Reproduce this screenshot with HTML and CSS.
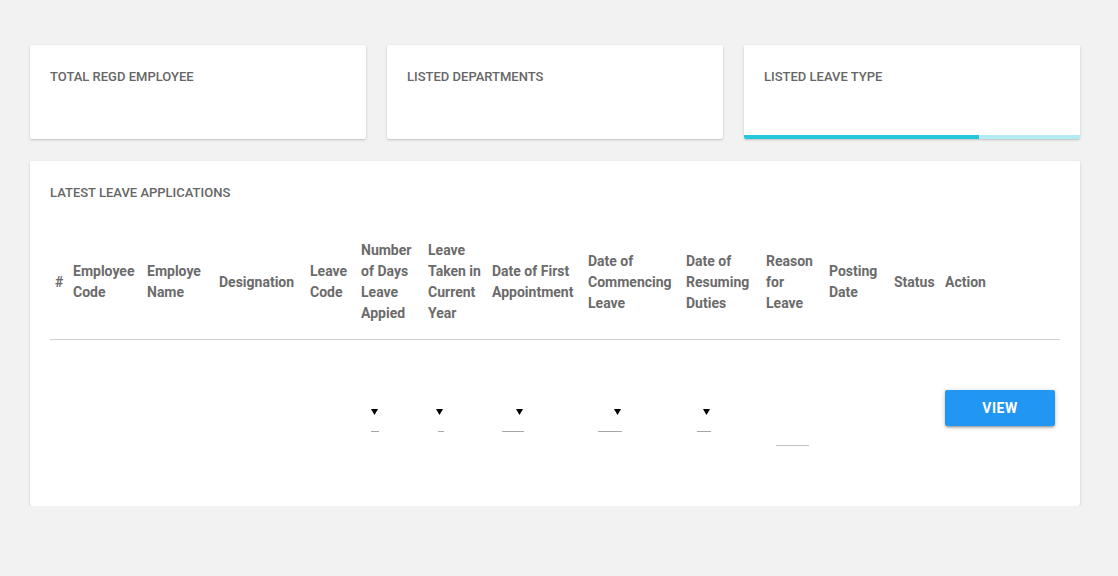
FILE: index.html
```html
<!DOCTYPE html>
<html>
<head>
<meta charset="utf-8">
<link rel="stylesheet" href="styles.css">
</head>
<body>
<div class="page">
  <div class="stats">
    <div class="card stat"><div class="card-title">Total Regd Employee</div></div>
    <div class="card stat"><div class="card-title">Listed Departments</div></div>
    <div class="card stat">
      <div class="card-title">Listed Leave Type</div>
      <div class="progress"><div class="progress-fill"></div></div>
    </div>
  </div>
  <div class="card main">
    <div class="card-title">Latest Leave Applications</div>
    <table class="apps">
      <colgroup>
        <col class="c1"><col class="c2"><col class="c3"><col class="c4"><col class="c5"><col class="c6"><col class="c7">
        <col class="c8"><col class="c9"><col class="c10"><col class="c11"><col class="c12"><col class="c13"><col class="c14">
      </colgroup>
      <thead>
        <tr>
          <th>#</th>
          <th>Employee Code</th>
          <th>Employe Name</th>
          <th>Designation</th>
          <th>Leave Code</th>
          <th>Number of Days Leave Appied</th>
          <th>Leave Taken in Current Year</th>
          <th>Date of First Appointment</th>
          <th>Date of Commencing Leave</th>
          <th>Date of Resuming Duties</th>
          <th>Reason for Leave</th>
          <th>Posting Date</th>
          <th class="nowrap">Status</th>
          <th class="nowrap">Action</th>
        </tr>
      </thead>
      <tbody>
        <tr>
          <td></td>
          <td></td>
          <td></td>
          <td></td>
          <td></td>
          <td><span class="select w8"><svg class="caret" viewBox="0 0 7 6"><polygon points="0,0 7,0 3.5,6"/></svg></span></td>
          <td><span class="select w6"><svg class="caret" viewBox="0 0 7 6"><polygon points="0,0 7,0 3.5,6"/></svg></span></td>
          <td><span class="select w22"><svg class="caret" viewBox="0 0 7 6"><polygon points="0,0 7,0 3.5,6"/></svg></span></td>
          <td><span class="select w24"><svg class="caret" viewBox="0 0 7 6"><polygon points="0,0 7,0 3.5,6"/></svg></span></td>
          <td><span class="select w14 ml11"><svg class="caret" viewBox="0 0 7 6"><polygon points="0,0 7,0 3.5,6"/></svg></span></td>
          <td><span class="textline"></span></td>
          <td></td>
          <td></td>
          <td><button class="btn">View</button></td>
        </tr>
      </tbody>
    </table>
  </div>
</div>
</body>
</html>
```
FILE: styles.css
```css
html, body {
  margin: 0;
  padding: 0;
  background: #f2f2f2;
  font-family: Roboto, "Liberation Sans", Arial, sans-serif;
}
.page {
  padding: 45px 38px 0 30px;
  width: 1050px;
}
.stats {
  display: flex;
  gap: 21px;
}
.card {
  background: #fff;
  border-radius: 2px;
  box-shadow: 0 1px 3px rgba(0,0,0,0.16), 0 1px 1px rgba(0,0,0,0.06);
  box-sizing: border-box;
}
.stat {
  flex: 1 1 0;
  height: 94px;
  padding: 20px;
  position: relative;
  overflow: hidden;
}
.card-title {
  font-size: 13px;
  font-weight: 500;
  line-height: 24px;
  color: #666;
  text-transform: uppercase;
}
.progress {
  position: absolute;
  left: 0;
  right: 0;
  bottom: 0;
  height: 4px;
  background: #b2ebf2;
}
.progress-fill {
  width: 70%;
  height: 100%;
  background: #26c6da;
}
.main {
  margin-top: 22px;
  padding: 20px 20px 45px 20px;
}
.apps {
  margin-top: 20px;
  width: 1010px;
  table-layout: fixed;
  border-collapse: collapse;
}
.c1 { width: 18px; }
.c2 { width: 74px; }
.c3 { width: 72px; }
.c4 { width: 91px; }
.c5 { width: 51px; }
.c6 { width: 67px; }
.c7 { width: 64px; }
.c8 { width: 96px; }
.c9 { width: 98px; }
.c10 { width: 80px; }
.c11 { width: 63px; }
.c12 { width: 65px; }
.c13 { width: 51px; }
.c14 { width: 120px; }
.apps th {
  padding: 15px 5px;
  text-align: left;
  vertical-align: middle;
  font-size: 14px;
  font-weight: bold;
  line-height: 21px;
  color: #6b6b6b;
}
.apps th.nowrap { white-space: nowrap; }
.apps thead tr {
  border-bottom: 1px solid #d0d0d0;
}
.apps td {
  padding: 15px 5px;
  vertical-align: top;
}
.select {
  display: block;
  position: relative;
  margin: 56px 0 0 10px;
  height: 20px;
  border-bottom: 1px solid #a6a6a6;
  box-sizing: content-box;
}
.select.ml11 { margin-left: 11px; }
.w6 { width: 6px; }
.w8 { width: 8px; }
.w14 { width: 14px; }
.w22 { width: 22px; }
.w24 { width: 24px; }
.caret {
  position: absolute;
  right: 1px;
  top: -2px;
  width: 7px;
  height: 6px;
  fill: #000;
}
.textline {
  display: block;
  margin: 70px 0 0 10px;
  width: 33px;
  height: 20px;
  border-bottom: 1px solid #c4c4c4;
}
.btn {
  margin-top: 35px;
  width: 110px;
  height: 36px;
  border: none;
  border-radius: 2px;
  background: #2196f3;
  color: #fff;
  font-family: Roboto, "Liberation Sans", Arial, sans-serif;
  font-size: 14px;
  font-weight: bold;
  text-transform: uppercase;
  letter-spacing: 0.5px;
  box-shadow: 0 2px 2px rgba(0,0,0,0.14), 0 3px 1px -2px rgba(0,0,0,0.12), 0 1px 5px rgba(0,0,0,0.2);
  padding: 0;
}
```
